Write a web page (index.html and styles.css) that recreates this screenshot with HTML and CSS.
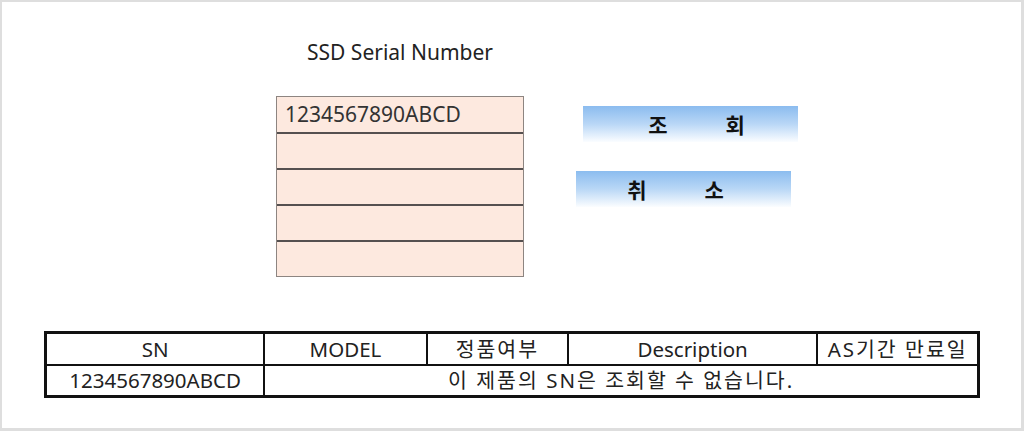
FILE: index.html
```html
<!DOCTYPE html>
<html lang="ko">
<head>
    <meta charset="UTF-8">
    <meta name="viewport" content="width=device-width, initial-scale=1.0">
    <title>SSD 정품 조회</title>
    <link rel="stylesheet" href="styles.css">
</head>
<body>
    <div class="frame">
        <!-- Serial number entry -->
        <div class="lookup">
            <div class="serial-block">
                <h1 class="serial-title">SSD Serial Number</h1>
                <div class="serial-list">
                    <div class="serial-row">1234567890ABCD</div>
                    <div class="serial-row"></div>
                    <div class="serial-row"></div>
                    <div class="serial-row"></div>
                    <div class="serial-row"></div>
                </div>
            </div>
            <div class="actions">
                <button class="action-btn search-btn"><span>조</span><span>회</span></button>
                <button class="action-btn cancel-btn"><span>취</span><span>소</span></button>
            </div>
        </div>

        <!-- Result table -->
        <table class="result">
            <tr>
                <th class="col-sn">SN</th>
                <th class="col-model">MODEL</th>
                <th class="col-genuine ko">정품여부</th>
                <th class="col-desc">Description</th>
                <th class="col-as ko">AS기간 만료일</th>
            </tr>
            <tr>
                <td>1234567890ABCD</td>
                <td class="ko" colspan="4">이 제품의 SN은 조회할 수 없습니다.</td>
            </tr>
        </table>
    </div>
</body>
</html>
```

FILE: styles.css
```css
* {
    margin: 0;
    padding: 0;
    box-sizing: border-box;
}

body {
    background: #dedede;
    width: 1024px;
    height: 431px;
    padding: 2px 3px 3px 2px;
    font-family: 'Noto Sans', 'Noto Sans CJK KR', sans-serif;
    color: #222;
}

.frame {
    background: #fff;
    height: 100%;
    padding-top: 34px;
}

.lookup {
    display: flex;
    align-items: flex-start;
}

.serial-block {
    margin-left: 274px;
    width: 248px;
}

.serial-title {
    font-size: 21px;
    font-weight: normal;
    color: #222;
    margin-left: 31px;
    line-height: 32px;
    height: 60px;
}

.serial-list {
    border: 1px solid #8d8581;
    background: #fde9df;
}

.serial-row {
    height: 36px;
    border-top: 2px solid #555050;
    font-size: 21px;
    line-height: 34px;
    padding-left: 8px;
    color: #333;
}

.serial-row:first-child {
    border-top: none;
    height: 35px;
}

.actions {
    display: flex;
    flex-direction: column;
    margin-left: 52px;
    margin-top: 70px;
}

.action-btn {
    width: 215px;
    height: 36px;
    border: none;
    background: linear-gradient(to bottom, #8bbcef 0%, #b9d7f6 50%, #fbfdff 100%);
    font-family: 'Noto Sans CJK KR', sans-serif;
    font-size: 21px;
    font-weight: bold;
    color: #111;
    display: flex;
    justify-content: center;
    gap: 58px;
    align-items: center;
}

.search-btn {
    margin-left: 7px;
    padding-left: 12px;
}

.cancel-btn {
    margin-top: 29px;
    padding-right: 16px;
}

.result {
    margin: 54px 0 0 42px;
    border-collapse: collapse;
    border: 3px solid #111;
    width: 936px;
    font-size: 20.5px;
}

.result th,
.result td {
    border: 2px solid #111;
    font-weight: normal;
    text-align: center;
    height: 32px;
    line-height: 28px;
    color: #222;
}

.result .ko {
    letter-spacing: 2px;
}

.col-sn { width: 219px; }
.col-model { width: 163px; }
.col-genuine { width: 142px; }
.col-desc { width: 250px; }
.col-as { width: 162px; }
```
